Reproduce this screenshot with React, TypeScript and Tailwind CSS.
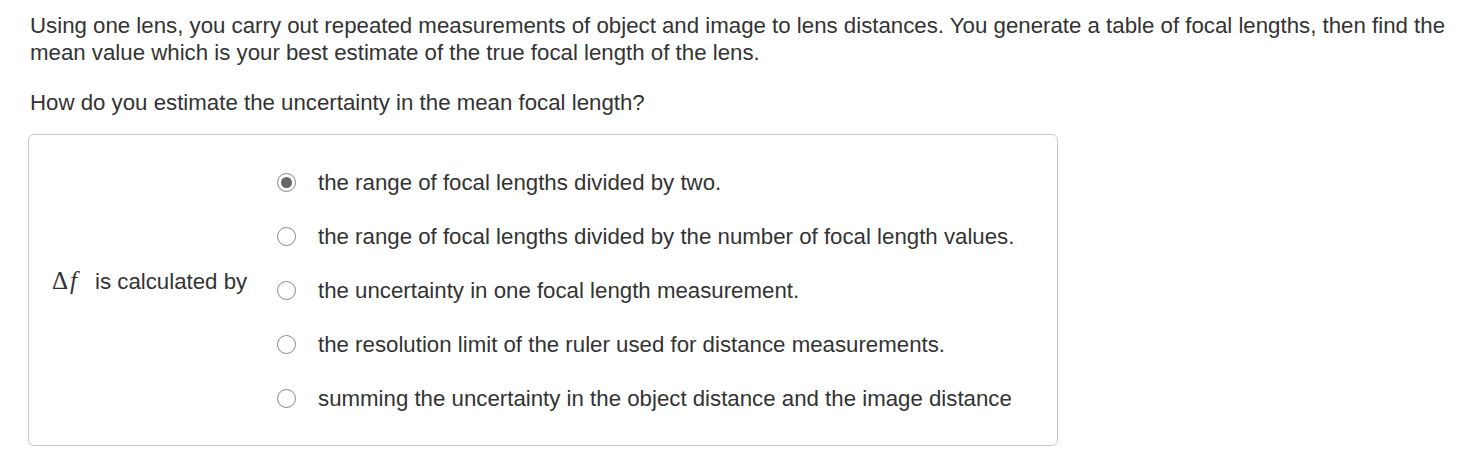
import { useState } from 'react';

const options = [
  'the range of focal lengths divided by two.',
  'the range of focal lengths divided by the number of focal length values.',
  'the uncertainty in one focal length measurement.',
  'the resolution limit of the ruler used for distance measurements.',
  'summing the uncertainty in the object distance and the image distance',
];

export default function App() {
  // selected answer index
  const [selected, setSelected] = useState(0);

  return (
    <main className="min-h-screen bg-white px-[30px] pt-[12px] text-[22.25px] leading-[27px] text-[#333] font-['Liberation_Sans',Arial,sans-serif]">
      <p className="pr-[4px]">
        Using one lens, you carry out repeated measurements of object and image to lens distances. You generate a table of focal lengths, then find the mean value which is your best estimate of the true focal length of the lens.
      </p>
      <p className="mt-[23px]">How do you estimate the uncertainty in the mean focal length?</p>

      <div className="mt-[18px] ml-[-2px] flex h-[312px] w-[1030px] items-center rounded-[6px] border border-[#c8c8c8]">
        <div className="mb-[19px] w-[248px] shrink-0 pl-[23px] whitespace-nowrap">
          <span className="font-['Liberation_Serif',serif] text-[25px]">Δ</span>
          <span className="ml-[2px] font-['Liberation_Serif',serif] text-[25px] italic">f</span>
          <span className="ml-[18px]">is calculated by</span>
        </div>
        <div className="flex flex-col">
          {options.map((opt, i) => (
            <label
              key={i}
              className="flex h-[54px] cursor-pointer items-center"
              onClick={() => setSelected(i)}
            >
              <span className="flex h-[19px] w-[19px] items-center justify-center rounded-full border-[1.5px] border-[#888]">
                {selected === i && <span className="h-[11px] w-[11px] rounded-full bg-[#666]" />}
              </span>
              <span className="ml-[22px]">{opt}</span>
            </label>
          ))}
        </div>
      </div>
    </main>
  );
}
